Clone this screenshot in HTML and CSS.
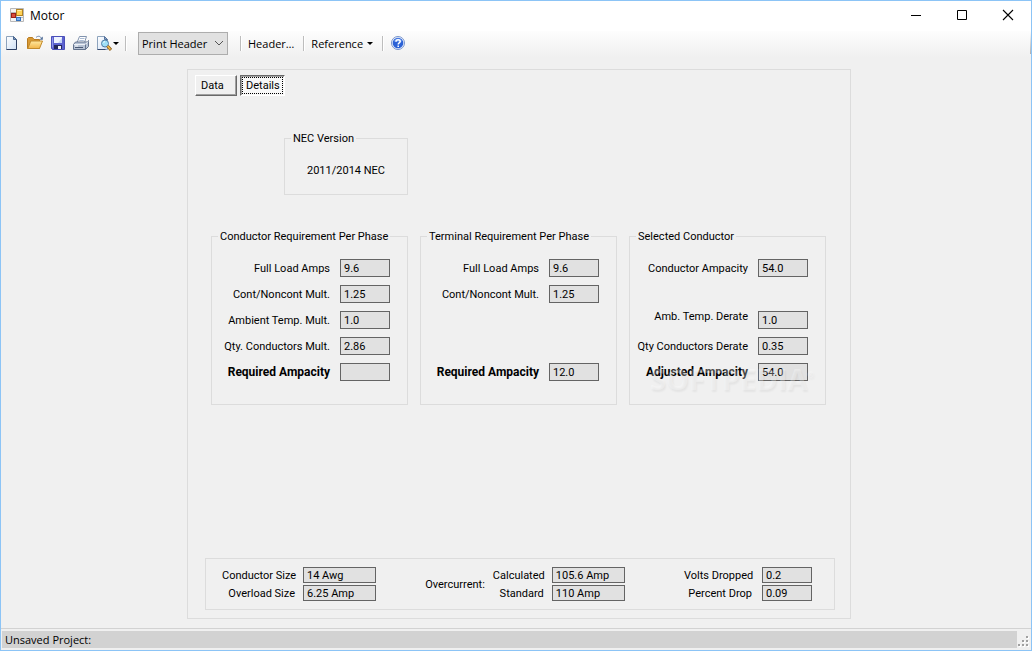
FILE: index.html
```html
<!DOCTYPE html>
<html lang="en">
<head>
<meta charset="utf-8">
<title>Motor</title>
<link rel="stylesheet" href="styles.css">
</head>
<body>
<div class="window">
  <header class="titlebar">
    <svg class="app-icon" width="15" height="14" viewBox="0 0 15 14" aria-hidden="true">
      <path d="M.5.5h13v13H.5zM.5 4.500h6M6.500.5v13M.5 9.500h13" fill="#f4f4f4" stroke="#b8b8b8"/>
      <rect x="6.500" y="1.500" width="6" height="6" fill="#ffd257" stroke="#b38321"/>
      <path d="M7.500 2.500h4" stroke="#fff0b0"/>
      <rect x="1.500" y="5.500" width="4" height="4" fill="#d94c3c" stroke="#982018"/>
      <rect x="6.500" y="9.500" width="4" height="3" fill="#78b0f2" stroke="#3672bd"/>
    </svg>
    <h1 class="title">Motor</h1>
    <button class="caption" type="button" aria-label="Minimize"><svg width="12" height="12" viewBox="0 0 12 12"><path d="M1 6.500h10" stroke="#000"/></svg></button>
    <button class="caption" type="button" aria-label="Maximize"><svg width="12" height="12" viewBox="0 0 12 12"><path d="M1.500 1.500h9v9h-9z" fill="none" stroke="#000"/></svg></button>
    <button class="caption" type="button" aria-label="Close"><svg width="12" height="12" viewBox="0 0 12 12"><path d="M1 1l10 10M11 1L1 11" stroke="#000" stroke-width="1.100"/></svg></button>
  </header>

  <nav class="toolbar" aria-label="Toolbar">
    <button class="tool" type="button" aria-label="New">
      <svg width="16" height="16" viewBox="0 0 16 16">
        <defs><linearGradient id="page" x2="1" y2="1"><stop stop-color="#fff"/><stop offset="1" stop-color="#cfe0f5"/></linearGradient></defs>
        <path d="M2.500 1.500h7l3 3v10h-10z" fill="url(#page)" stroke="#8da3bd"/>
        <path d="M12.500 4.500v10h-10" fill="none" stroke="#2d3f63"/>
        <path d="M9.500 1.500v3h3z" fill="#7d9cc4" stroke="#4b668e"/>
      </svg>
    </button>
    <button class="tool" type="button" aria-label="Open">
      <svg width="16" height="16" viewBox="0 0 16 16">
        <defs><linearGradient id="folder" x2="0" y2="1"><stop stop-color="#ffe9a0"/><stop offset="1" stop-color="#f2b548"/></linearGradient></defs>
        <path d="M.5 13.500v-10l1-1h4l1.500 2h5.500v9z" fill="#d99a35" stroke="#b87b20"/>
        <path d="M.8 13.500l3-7.500h11.700l-3 7.500z" fill="url(#folder)" stroke="#c28a2c"/>
        <path d="M9 2.500c2-2 4.500-1.500 5.500 1" fill="none" stroke="#6b86ad"/>
        <path d="M15.800 1.500v3.300h-3.300z" fill="#536f99"/>
      </svg>
    </button>
    <button class="tool" type="button" aria-label="Save">
      <svg width="16" height="16" viewBox="0 0 16 16">
        <path d="M1.500 1.500h13v13h-12l-1-1z" fill="#5c62cf" stroke="#4a4fb8"/>
        <path d="M4 2h8v6H4z" fill="#eef3ff"/><path d="M8 8l4-5v5z" fill="#c5d4f5"/>
        <path d="M4 10h8v4H4z" fill="#23275c"/><path d="M8 11h3v3H8z" fill="#f4f4fb"/>
        <path d="M2.500 2.500v10" stroke="#8f95eb"/>
      </svg>
    </button>
    <button class="tool" type="button" aria-label="Print">
      <svg width="16" height="16" viewBox="0 0 16 16">
        <path d="M3.500 9l3-7.500h7L11 9z" fill="#fff" stroke="#8193ae"/>
        <path d="M7 3.500h4.500M6.300 5.500h4.500" stroke="#aabbd4"/>
        <path d="M.5 9.500l2-2.500h12l1-1.500v6l-3 3H.5z" fill="#b7c2d4" stroke="#64738d"/>
        <path d="M1 9.500h11.500l2.500-3" fill="none" stroke="#edf1f7"/>
        <path d="M12.500 9.500v5" stroke="#64738d"/>
        <path d="M2 12.500h8" stroke="#4a5974"/><path d="M2 11h3" stroke="#f8fafc"/>
      </svg>
    </button>
    <button class="tool tool-preview" type="button" aria-label="Print preview">
      <svg width="16" height="16" viewBox="0 0 16 16">
        <path d="M1.500 1.500h7l3 3v10h-10z" fill="url(#page)" stroke="#8da3bd"/>
        <path d="M8.500 1.500v3h3z" fill="#8aa5c9" stroke="#58749c"/>
        <path d="M1.500 14.500h8" stroke="#34496f"/>
        <circle cx="9" cy="8.500" r="3.500" fill="#9fe0f7" stroke="#507ea8"/>
        <path d="M7.500 7.500l1.500-1" stroke="#fff"/>
        <path d="M11.500 11l3.500 4" stroke="#8a5a16" stroke-width="3"/><path d="M11.500 11l3 3.500" stroke="#efb84a" stroke-width="1.500"/>
      </svg>
      <span class="drop"></span>
    </button>
    <span class="sep"></span>
    <select class="print-header" aria-label="Print section"><option>Print Header</option></select>
    <span class="sep"></span>
    <button class="tool tool-text" type="button">Header…</button>
    <span class="sep"></span>
    <button class="tool tool-text" type="button">Reference <span class="drop"></span></button>
    <span class="sep"></span>
    <button class="tool" type="button" aria-label="Help">
      <svg width="16" height="16" viewBox="0 0 16 16">
        <circle cx="8" cy="8" r="6.500" fill="#eaf1fc" stroke="#7693cc"/>
        <circle cx="8" cy="8" r="5.300" fill="#2c62d6"/>
        <path d="M4 6.500a4.200 4.200 0 0 1 8 0z" fill="#6d9bf0"/>
        <path d="M6 6.700c0-2.700 4.200-2.500 4.200-.2C10.200 8 8.200 7.800 8.200 9.500M8.200 10.500v1.500" fill="none" stroke="#fff" stroke-width="1.500"/>
      </svg>
    </button>
  </nav>

  <main class="workspace">
    <section class="panel">
      <div class="tabs">
        <button class="tab" type="button">Data</button>
        <button class="tab tab-active" type="button" aria-pressed="true"><span class="focus">Details</span></button>
      </div>

      <fieldset class="group version">
        <legend>NEC Version</legend>
        <p class="version-text">2011/2014 NEC</p>
      </fieldset>

      <div class="groups">
        <fieldset class="group">
          <legend>Conductor Requirement Per Phase</legend>
          <div class="rows">
            <div class="row"><label for="c1">Full Load Amps</label><input id="c1" class="value" value="9.6" readonly></div>
            <div class="row"><label for="c2">Cont/Noncont Mult.</label><input id="c2" class="value" value="1.25" readonly></div>
            <div class="row"><label for="c3">Ambient Temp. Mult.</label><input id="c3" class="value" value="1.0" readonly></div>
            <div class="row"><label for="c4">Qty. Conductors Mult.</label><input id="c4" class="value" value="2.86" readonly></div>
            <div class="row total"><label for="c5">Required Ampacity</label><input id="c5" class="value" value="" readonly></div>
          </div>
        </fieldset>
        <fieldset class="group">
          <legend>Terminal Requirement Per Phase</legend>
          <div class="rows">
            <div class="row"><label for="t1">Full Load Amps</label><input id="t1" class="value" value="9.6" readonly></div>
            <div class="row"><label for="t2">Cont/Noncont Mult.</label><input id="t2" class="value" value="1.25" readonly></div>
            <div class="row"></div>
            <div class="row"></div>
            <div class="row total"><label for="t5">Required Ampacity</label><input id="t5" class="value" value="12.0" readonly></div>
          </div>
        </fieldset>
        <fieldset class="group">
          <legend>Selected Conductor</legend>
          <div class="rows">
            <div class="row"><label for="s1">Conductor Ampacity</label><input id="s1" class="value" value="54.0" readonly></div>
            <div class="row"></div>
            <div class="row row-top"><label for="s3">Amb. Temp. Derate</label><input id="s3" class="value" value="1.0" readonly></div>
            <div class="row"><label for="s4">Qty Conductors Derate</label><input id="s4" class="value" value="0.35" readonly></div>
            <div class="row total"><label for="s5">Adjusted Ampacity</label><input id="s5" class="value" value="54.0" readonly></div>
          </div>
          <span class="watermark" aria-hidden="true">SOFTPEDIA<sup>®</sup></span>
        </fieldset>
      </div>

      <div class="summary">
        <div class="pairs pairs-size">
          <label for="z1">Conductor Size</label><input id="z1" class="value" value="14 Awg" readonly>
          <label for="z2">Overload Size</label><input id="z2" class="value" value="6.25 Amp" readonly>
        </div>
        <div class="overcurrent">
          <span>Overcurrent:</span>
          <div class="pairs pairs-current">
            <label for="o1">Calculated</label><input id="o1" class="value" value="105.6 Amp" readonly>
            <label for="o2">Standard</label><input id="o2" class="value" value="110 Amp" readonly>
          </div>
        </div>
        <div class="pairs pairs-drop">
          <label for="v1">Volts Dropped</label><input id="v1" class="value" value="0.2" readonly>
          <label for="v2">Percent Drop</label><input id="v2" class="value" value="0.09" readonly>
        </div>
      </div>
    </section>
  </main>

  <footer class="statusbar">
    <span class="status">Unsaved Project:</span>
    <svg class="grip" width="12" height="12" viewBox="0 0 12 12" aria-hidden="true">
      <path d="M9 1h2v2H9zM5 5h2v2H5zM9 5h2v2H9zM1 9h2v2H1zM5 9h2v2H5zM9 9h2v2H9z" fill="#fff"/>
      <path d="M8 0h2v2H8zM4 4h2v2H4zM8 4h2v2H8zM0 8h2v2H0zM4 8h2v2H4zM8 8h2v2H8z" fill="#a0a0a0"/>
    </svg>
  </footer>
</div>
</body>
</html>
```
FILE: styles.css
```css
* { box-sizing: border-box; }

body {
  margin: 0;
  background: #f0f0f0;
  color: #000;
  font: 11px/15px Roboto, "Liberation Sans", Arial, sans-serif;
}

button, input, select { font: inherit; color: inherit; margin: 0; }

.window {
  display: flex;
  flex-direction: column;
  min-height: 100vh;
  border: 1px solid #8cc4f6;
}

/* Title bar */
.titlebar {
  display: flex;
  align-items: center;
  height: 30px;
  padding: 0 0 2px 9px;
  background: #fff;
  font-family: "Open Sans", "Noto Sans", sans-serif;
}
.title { flex: 1; margin: 0 0 0 5px; font-size: 12px; font-weight: 400; }
.caption {
  display: grid;
  place-items: center;
  width: 46px;
  height: 28px;
  padding: 0;
  border: 0;
  background: none;
}

/* Toolbar */
.toolbar {
  display: flex;
  align-items: center;
  height: 26px;
  padding: 0 3px 2px 3px;
  background:
    linear-gradient(#fff, #b0b0b0) right top / 1px 23px no-repeat,
    linear-gradient(#fdfdfd, #f0f0f0);
  font-family: "Open Sans", "Noto Sans", sans-serif;
}
.tool {
  display: flex;
  align-items: center;
  gap: 4px;
  height: 22px;
  padding: 0;
  margin-right: 7px;
  border: 0;
  background: none;
}
.tool-preview { gap: 1px; margin-right: 6px; }
.tool-text { margin-right: 9px; }
.tool svg { display: block; }
.drop {
  border: 3px solid transparent;
  border-top-color: #000;
  border-bottom: 0;
}
.sep {
  width: 2px;
  height: 15px;
  margin-right: 6px;
  border-left: 1px solid #bdbdbd;
  border-right: 1px solid #fff;
}
.print-header {
  width: 90px;
  height: 23px;
  padding: 0 3px;
  margin: 0 12px 0 5px;
  border: 1px solid #adadad;
  border-radius: 0;
  appearance: none;
  background: #e1e1e1 url("data:image/svg+xml,%3Csvg xmlns='http://www.w3.org/2000/svg' width='10' height='6'%3E%3Cpath d='M1 1l4 4 4-4' fill='none' stroke='%23555'/%3E%3C/svg%3E") right 3px center no-repeat;
}

/* Main panel */
.workspace {
  flex: 1;
  display: flex;
  justify-content: center;
  padding: 12px 0 9px 6px;
}
.panel {
  display: flex;
  flex-direction: column;
  width: 100%;
  max-width: 664px;
  padding: 5px 15px 8px 7px;
  border: 1px solid #dcdcdc;
}
.tabs { display: flex; gap: 3px; }
.tab {
  height: 21px;
  min-width: 42px;
  padding: 0 5px;
  border: 1px solid;
  border-color: #fff #696969 #696969 #fff;
  box-shadow: inset -1px -1px #a0a0a0;
  background: #f0f0f0;
  text-align: left;
}
.tab-active {
  padding: 1px;
  border-color: #696969 #fff #fff #696969;
  box-shadow: inset 1px 1px #a0a0a0;
  background: #f8f8f8;
}
.focus {
  display: block;
  padding: 0 2px 0 3px;
  border: 1px dotted #000;
}

.group {
  position: relative;
  min-width: 0;
  margin: 0;
  padding: 15px 17px 23px 6px;
  border: 1px solid #dcdcdc;
}
.group legend { padding: 0 2px; margin-right: -12px; white-space: nowrap; }
.version {
  width: 124px;
  margin: 35px 0 34px 89px;
  padding: 17px 6px 16px;
}
.version-text { margin: 0; text-align: center; }

.groups {
  display: grid;
  grid-template-columns: repeat(3, minmax(0, 1fr));
  gap: 12px;
  margin: 0 9px 0 16px;
}
.rows { display: grid; grid-auto-rows: 18px; gap: 8px; }
.row {
  display: flex;
  justify-content: flex-end;
  align-items: center;
  gap: 10px;
}
.row label { white-space: nowrap; }
.row-top label { align-self: flex-start; line-height: 12px; }
.total label { font-size: 12px; font-weight: 700; }

.value {
  width: 50px;
  height: 18px;
  padding: 0 3px;
  border: 1px solid #646464;
  border-radius: 0;
  background: #e1e1e1;
}

.watermark {
  position: absolute;
  right: 11px;
  bottom: 9px;
  color: rgba(255, 255, 255, .3);
  font: 700 29px/32px "Open Sans", sans-serif;
  text-shadow: 1px 2px 2px rgba(0, 0, 0, .05);
  pointer-events: none;
}
.watermark sup { font-size: 8px; line-height: 8px; vertical-align: 12px; }

/* Summary strip */
.summary {
  display: flex;
  justify-content: space-between;
  margin: auto 0 0 10px;
  padding: 8px 22px 8px 16px;
  border: 1px solid #dcdcdc;
}
.pairs {
  display: grid;
  grid-auto-rows: 16px;
  gap: 2px 8px;
  align-items: center;
  text-align: right;
  white-space: nowrap;
}
.pairs .value { width: 100%; height: 16px; }
.pairs-size { grid-template-columns: 73px 73px; }
.pairs-current { grid-template-columns: 51px 73px; }
.pairs-drop { grid-template-columns: 68px 50px; column-gap: 10px; }
.overcurrent {
  display: flex;
  align-items: center;
  gap: 8px;
  margin-right: 10px;
}

/* Status bar */
.statusbar {
  display: flex;
  align-items: flex-end;
  padding: 2px 1px;
  border-top: 1px solid #d2d2d2;
  font-family: "Open Sans", "Noto Sans", sans-serif;
}
.status {
  flex: 1;
  height: 17px;
  padding-left: 3px;
  background: #d2d2d2;
  line-height: 17px;
}
.grip { margin-left: 1px; }
```
